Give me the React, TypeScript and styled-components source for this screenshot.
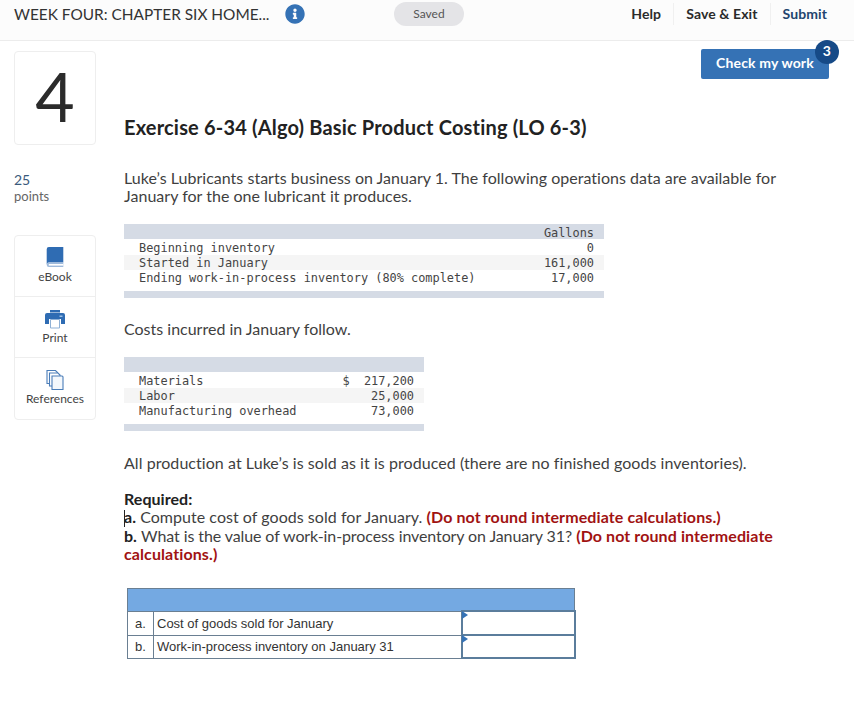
import React from "react";
import styled, { createGlobalStyle } from "styled-components";
import { FaInfoCircle } from "react-icons/fa";

const GlobalStyle = createGlobalStyle`
  html, body {
    margin: 0;
    padding: 0;
    background: #fff;
    color: #2b2b2b;
    font-family: Lato, "Open Sans", sans-serif;
  }
`;

const Page = styled.div`
  width: 854px;
  height: 705px;
  overflow: hidden;
`;

const Header = styled.header`
  display: flex;
  align-items: center;
  height: 41px;
  box-sizing: border-box;
  padding: 0 27px 13px 14px;
  background: #fcfcfc;
  border-bottom: 1px solid #ececec;
`;

const AssignmentTitle = styled.div`
  width: 271px;
  font-size: 15.4px;
  color: #333;
  white-space: nowrap;
`;

const InfoIcon = styled(FaInfoCircle)`
  width: 20px;
  height: 20px;
  color: #3572b5;
`;

const SavedPill = styled.div`
  margin-left: 89px;
  width: 70px;
  height: 24px;
  border-radius: 12px;
  background: #e4e4e7;
  color: #555;
  font-size: 12px;
  line-height: 24px;
  text-align: center;
`;

const HeaderLinks = styled.nav`
  display: flex;
  align-items: center;
  margin-left: auto;
`;

const HeaderLink = styled.a<{ $primary?: boolean }>`
  padding: 0 12px;
  height: 22px;
  line-height: 22px;
  font-size: 14px;
  font-weight: 700;
  letter-spacing: 0.1px;
  color: ${(p) => (p.$primary ? "#23456e" : "#2b2b2b")};
  border-left: 1px solid #f0f0f0;

  &:first-child {
    border-left: 0;
  }
  &:last-child {
    padding-right: 0;
  }
`;

const Body = styled.div`
  display: flex;
  gap: 28px;
  padding: 8px 25px 0 14px;
`;

const Sidebar = styled.aside`
  flex: 0 0 82px;
  padding-top: 2px;
`;

const NumberCard = styled.div`
  height: 94px;
  box-sizing: border-box;
  border: 1px solid #eee;
  border-radius: 4px;
  font-size: 68px;
  line-height: 88px;
  text-align: center;
  color: #2b2b2b;
`;

const Points = styled.div`
  margin-top: 27px;
  font-size: 13px;
  line-height: 16px;
  color: #666;

  & > strong {
    display: block;
    font-size: 14px;
    font-weight: 400;
    color: #3a5a7c;
  }
`;

const Tools = styled.div`
  margin-top: 31px;
  border: 1px solid #eee;
  border-radius: 4px;
`;

const Tool = styled.div`
  height: 61px;
  box-sizing: border-box;
  display: flex;
  flex-direction: column;
  align-items: center;
  padding-top: 11px;
  font-size: 12px;
  line-height: 16px;
  color: #444;
  border-bottom: 1px solid #eee;

  &:last-child {
    border-bottom: 0;
  }

  & > svg {
    width: 22px;
    height: 22px;
  }
`;

const Main = styled.main`
  flex: 1;
  min-width: 0;
`;

const TopRow = styled.div`
  display: flex;
  justify-content: flex-end;
`;

const CheckButton = styled.button`
  position: relative;
  width: 128px;
  height: 30px;
  padding: 0 0 3px;
  border: 0;
  border-radius: 2px;
  background: #3572b5;
  color: #fff;
  font-family: inherit;
  font-size: 14px;
  font-weight: 700;
  letter-spacing: 0.15px;
`;

const Badge = styled.span`
  position: absolute;
  top: -9px;
  right: -10px;
  width: 24px;
  height: 24px;
  border-radius: 50%;
  background: #164a87;
  color: #fff;
  font-size: 14px;
  font-weight: 700;
  line-height: 22px;
  text-align: center;
`;

const Title = styled.h1`
  margin: 36px 0 0;
  font-size: 20px;
  line-height: 24px;
  font-weight: 700;
  letter-spacing: 0.18px;
  color: #222;
`;

const Paragraph = styled.p<{ $top: number; $spacing?: number }>`
  margin: ${(p) => p.$top}px 0 0;
  width: 660px;
  font-size: 16px;
  line-height: 18px;
  letter-spacing: ${(p) => p.$spacing ?? 0.02}px;
  color: #3f3f3f;
`;

const Strong = styled.strong`
  color: #222;
`;

const Warn = styled.strong`
  letter-spacing: 0.1px;
  color: #a11212;
`;

const Tight = styled.span`
  letter-spacing: -0.1px;
`;

const Caret = styled.span`
  display: inline-block;
  width: 1px;
  height: 17px;
  margin-right: -1px;
  vertical-align: -4px;
  background: #222;
`;

const DataTable = styled.table<{ $width: number; $top: number }>`
  width: ${(p) => p.$width}px;
  margin-top: ${(p) => p.$top}px;
  border-collapse: collapse;
  font-family: "DejaVu Sans Mono", monospace;
  font-size: 11.9px;
  color: #444;

  & td {
    box-sizing: border-box;
    height: 15px;
    padding: 2px 0 0;
    line-height: 13px;
    white-space: pre;
  }
`;

const BandRow = styled.tr`
  background: #d5dbe5;

  & td {
    padding-top: 3px;
    line-height: 12px;
  }
`;

const ThinBand = styled.tr`
  background: #d5dbe5;

  & td {
    height: 7px;
    padding: 0;
    line-height: 7px;
    font-size: 1px;
  }
`;

const DataRow = styled.tr<{ $shade?: boolean }>`
  background: ${(p) => (p.$shade ? "#f5f5f5" : "#fff")};
`;

const SpacerRow = styled.tr<{ $height: number }>`
  & td {
    height: ${(p) => p.$height}px;
    padding: 0;
    line-height: ${(p) => p.$height}px;
    font-size: 1px;
  }
`;

const LabelCell = styled.td`
  padding-left: 15px !important;
`;

const NumCell = styled.td`
  padding-right: 10px !important;
  text-align: right;
`;

const AnswerTable = styled.table`
  width: 447px;
  margin: 25px 0 0 3px;
  border-collapse: collapse;
  table-layout: fixed;
  font-family: "Liberation Sans", Arial, sans-serif;
  font-size: 13px;
  color: #333;
`;

const AnswerRow = styled.tr<{ $height: number }>`
  & > td {
    height: ${(p) => p.$height}px;
  }
`;

const AnswerHead = styled.td`
  padding: 0;
  background: #74a9e2;
  border: 1px solid #6a7f92;
`;

const AnswerCell = styled.td<{ $center?: boolean }>`
  padding: 0 3px;
  border: 1px solid #6a7f92;
  text-align: ${(p) => (p.$center ? "center" : "left")};
  white-space: nowrap;
`;

const InputCell = styled.td`
  position: relative;
  padding: 0;
  background: #fff;
  border: 2px solid #5b7d9c;

  &::before {
    content: "";
    position: absolute;
    top: -1px;
    left: -1px;
    border-style: solid;
    border-width: 4px 0 4px 6px;
    border-color: transparent transparent transparent #3572b5;
  }
`;

const BookIcon = () => (
  <svg viewBox="0 0 22 22">
    <path d="M2.7 2.2A2.2 2.2 0 0 1 4.9 0h14.4v15.5H4.9a2.2 2.2 0 0 0-2.2 2.2z" fill="#2f6cb3" />
    <path d="M2.7 17.8a2.2 2.2 0 0 1 2.2-2.3h14.4V20H4.9a2.2 2.2 0 0 1-2.2-2.2z" fill="#9fbadb" />
    <path d="M4.8 17h14.5v1.6H4.8z" fill="#fff" />
  </svg>
);

const PrintIcon = () => (
  <svg viewBox="0 0 22 22">
    <path d="M6 2h10v2.5H6z" fill="#2f6cb3" />
    <path d="M1 7a2 2 0 0 1 2-2h16a2 2 0 0 1 2 2v9h-4v-5H5v5H1z" fill="#2f6cb3" />
    <path d="M6.5 11.5h9v8.5h-9z" fill="#fff" stroke="#8fb1d6" />
    <path d="M15.5 7.5h3V9h-3z" fill="#9cc0e6" />
  </svg>
);

const RefsIcon = () => (
  <svg viewBox="0 0 22 22" fill="#fff" stroke="#4a7db8" strokeWidth="1.1">
    <path d="M3 1.5h8.5l2 2v11H3z" />
    <path d="M5.5 4h8.5l2 2v11H5.5z" />
    <path d="M8 7h10a1 1 0 0 1 1 1v12.5H8z" fill="#f4f8fc" />
  </svg>
);

export default function App() {
  return (
    <Page>
      <GlobalStyle />
      <Header>
        <AssignmentTitle>WEEK FOUR: CHAPTER SIX HOME...</AssignmentTitle>
        <InfoIcon />
        <SavedPill>Saved</SavedPill>
        <HeaderLinks>
          <HeaderLink>Help</HeaderLink>
          <HeaderLink>Save &amp; Exit</HeaderLink>
          <HeaderLink $primary>Submit</HeaderLink>
        </HeaderLinks>
      </Header>
      <Body>
        <Sidebar>
          <NumberCard>4</NumberCard>
          <Points>
            <strong>25</strong>
            points
          </Points>
          <Tools>
            <Tool>
              <BookIcon />
              eBook
            </Tool>
            <Tool>
              <PrintIcon />
              Print
            </Tool>
            <Tool>
              <RefsIcon />
              References
            </Tool>
          </Tools>
        </Sidebar>
        <Main>
          <TopRow>
            <CheckButton>
              Check my work
              <Badge>3</Badge>
            </CheckButton>
          </TopRow>
          <Title>Exercise 6-34 (Algo) Basic Product Costing (LO 6-3)</Title>
          <Paragraph $top={30}>
            Luke’s Lubricants starts business on January 1. The following operations data are
            available for January for the one lubricant it produces.
          </Paragraph>
          <DataTable $width={480} $top={19}>
            <tbody>
              <BandRow>
                <td />
                <NumCell>Gallons</NumCell>
              </BandRow>
              <SpacerRow $height={1}>
                <td colSpan={2} />
              </SpacerRow>
              <DataRow>
                <LabelCell>Beginning inventory</LabelCell>
                <NumCell>0</NumCell>
              </DataRow>
              <DataRow $shade>
                <LabelCell>Started in January</LabelCell>
                <NumCell>161,000</NumCell>
              </DataRow>
              <DataRow>
                <LabelCell>Ending work-in-process inventory (80% complete)</LabelCell>
                <NumCell>17,000</NumCell>
              </DataRow>
              <SpacerRow $height={6}>
                <td colSpan={2} />
              </SpacerRow>
              <ThinBand>
                <td colSpan={2} />
              </ThinBand>
            </tbody>
          </DataTable>
          <Paragraph $top={22} $spacing={0}>
            Costs incurred in January follow.
          </Paragraph>
          <DataTable $width={300} $top={19}>
            <tbody>
              <BandRow>
                <td colSpan={2} />
              </BandRow>
              <SpacerRow $height={1}>
                <td colSpan={2} />
              </SpacerRow>
              <DataRow>
                <LabelCell>Materials</LabelCell>
                <NumCell>$  217,200</NumCell>
              </DataRow>
              <DataRow $shade>
                <LabelCell>Labor</LabelCell>
                <NumCell>25,000</NumCell>
              </DataRow>
              <DataRow>
                <LabelCell>Manufacturing overhead</LabelCell>
                <NumCell>73,000</NumCell>
              </DataRow>
              <SpacerRow $height={6}>
                <td colSpan={2} />
              </SpacerRow>
              <ThinBand>
                <td colSpan={2} />
              </ThinBand>
            </tbody>
          </DataTable>
          <Paragraph $top={23} $spacing={0.055}>
            All production at Luke’s is sold as it is produced (there are no finished goods
            inventories).
          </Paragraph>
          <Paragraph $top={18} $spacing={0.04}>
            <Strong>Required:</Strong>
            <br />
            <Caret />
            <Strong>a.</Strong> Compute cost of goods sold for January.{" "}
            <Warn>(Do not round intermediate calculations.)</Warn>
            <br />
            <Strong>b.</Strong>{" "}
            <Tight>What is the value of work-in-process inventory on January 31?</Tight>{" "}
            <Warn>(Do not round intermediate calculations.)</Warn>
          </Paragraph>
          <AnswerTable>
            <colgroup>
              <col width="26" />
              <col width="308" />
              <col width="113" />
            </colgroup>
            <tbody>
              <AnswerRow $height={21}>
                <AnswerHead colSpan={3} />
              </AnswerRow>
              <AnswerRow $height={22}>
                <AnswerCell $center>a.</AnswerCell>
                <AnswerCell>Cost of goods sold for January</AnswerCell>
                <InputCell />
              </AnswerRow>
              <AnswerRow $height={21}>
                <AnswerCell $center>b.</AnswerCell>
                <AnswerCell>Work-in-process inventory on January 31</AnswerCell>
                <InputCell />
              </AnswerRow>
            </tbody>
          </AnswerTable>
        </Main>
      </Body>
    </Page>
  );
}
